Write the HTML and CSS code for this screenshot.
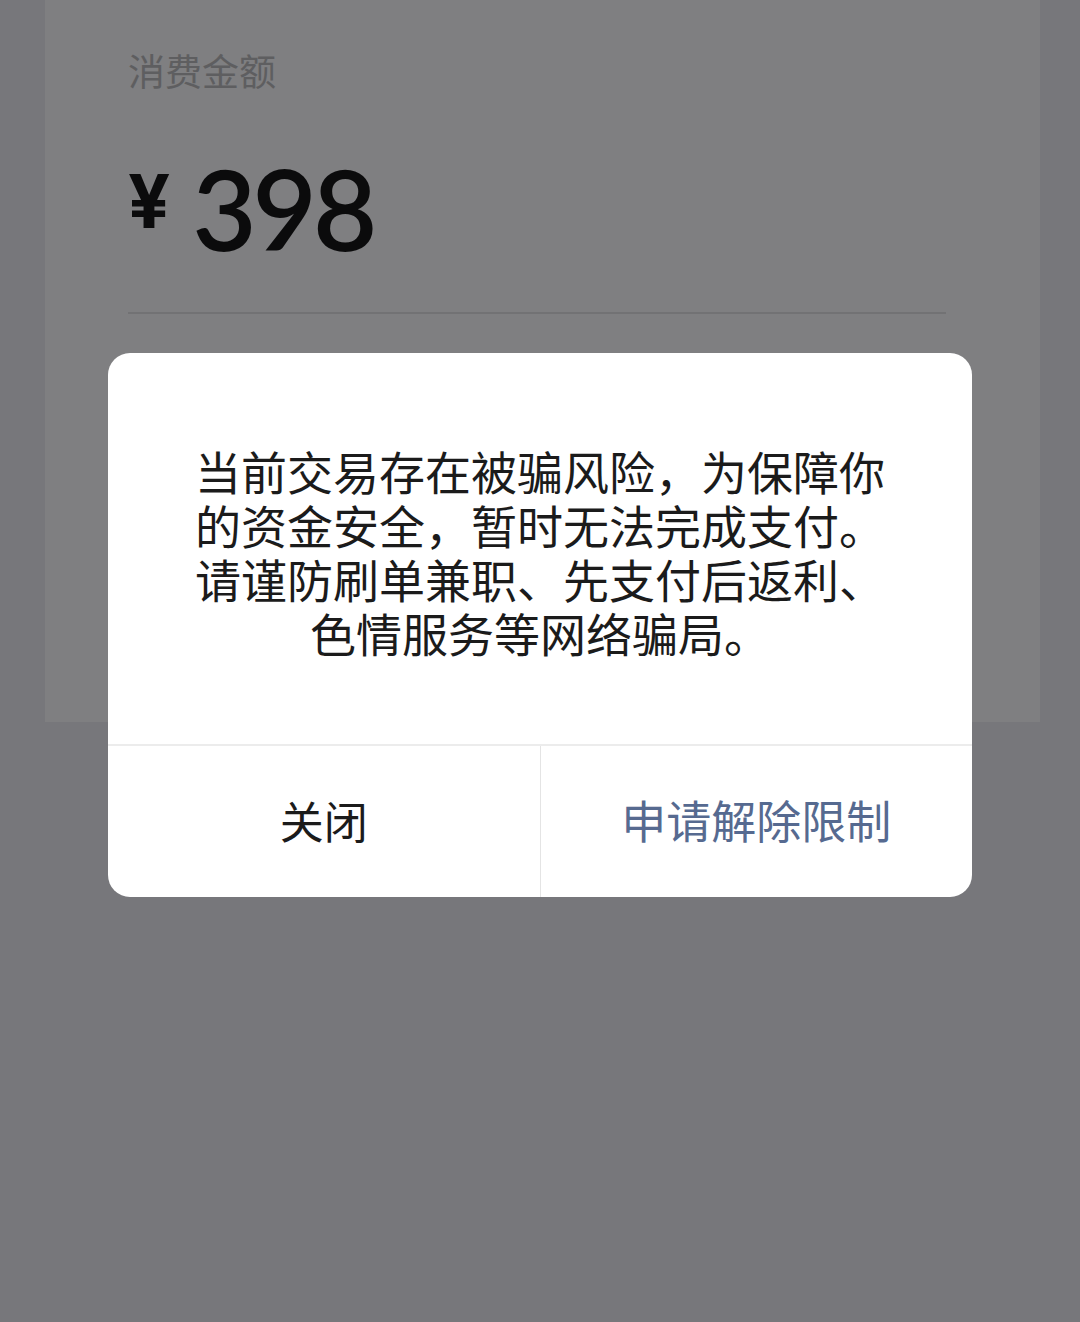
FILE: index.html
```html
<!DOCTYPE html>
<html lang="zh-CN">
<head>
<meta charset="utf-8">
<title>支付</title>
<link rel="stylesheet" href="styles.css">
</head>
<body>
<div class="page">
  <div class="card">
    <div class="label">消费金额</div>
    <div class="amount"><span class="yen">¥</span><span class="num">398</span></div>
    <div class="divider"></div>
  </div>
</div>
<div class="dialog">
  <div class="dialog-body">
    <div class="line">当前交易存在被骗风险，为保障你</div>
    <div class="line">的资金安全，暂时无法完成支付。</div>
    <div class="line">请谨防刷单兼职、先支付后返利、</div>
    <div class="line">色情服务等网络骗局。</div>
  </div>
  <div class="dialog-actions">
    <div class="btn btn-close">关闭</div>
    <div class="btn btn-apply">申请解除限制</div>
  </div>
</div>
</body>
</html>
```

FILE: styles.css
```css
html, body {
  margin: 0;
  padding: 0;
}
body {
  width: 1080px;
  height: 1322px;
  background: #77777b;
  font-family: "Noto Sans CJK SC", "Noto Sans", sans-serif;
  overflow: hidden;
}
.page {
  padding-left: 45px;
}
.card {
  width: 912px;
  height: 722px;
  background: #7f7f81;
  padding-left: 83px;
  box-sizing: content-box;
}
.label {
  padding-top: 48px;
  font-size: 37px;
  line-height: 44px;
  color: #5e5e60;
}
.amount {
  display: flex;
  align-items: flex-start;
  margin-top: 58px;
  height: 120px;
}
.yen {
  font-family: "Inter", "Noto Sans", sans-serif;
  font-weight: 700;
  font-size: 74px;
  line-height: 74px;
  color: #0b0b0c;
  margin-left: 0;
  margin-top: 14px;
}
.num {
  font-family: "Lato", "Inter", sans-serif;
  font-weight: 600;
  font-size: 111px;
  line-height: 110px;
  color: #0b0b0c;
  letter-spacing: -4px;
  margin-left: 22px;
  margin-top: 3px;
}
.divider {
  margin-top: 42px;
  width: 818px;
  height: 2px;
  background: #727274;
}
.dialog {
  position: absolute;
  left: 108px;
  top: 353px;
  width: 864px;
  height: 544px;
  background: #ffffff;
  border-radius: 22px;
  overflow: hidden;
  display: flex;
  flex-direction: column;
}
.dialog-body {
  height: 393px;
  box-sizing: border-box;
  padding-top: 90px;
  text-align: center;
  font-size: 46px;
  color: #1b1b1b;
  border-bottom: 2px solid #ececec;
}
.line {
  height: 54px;
  line-height: 54px;
  white-space: nowrap;
}
.dialog-actions {
  flex: 1;
  display: flex;
}
.btn {
  flex: 1;
  display: flex;
  align-items: center;
  justify-content: center;
  font-size: 44px;
  padding-bottom: 4px;
}
.btn-close {
  color: #1b1b1b;
  border-right: 1px solid #e4e4e4;
}
.btn-apply {
  color: #566a90;
  font-size: 45px;
}
```
